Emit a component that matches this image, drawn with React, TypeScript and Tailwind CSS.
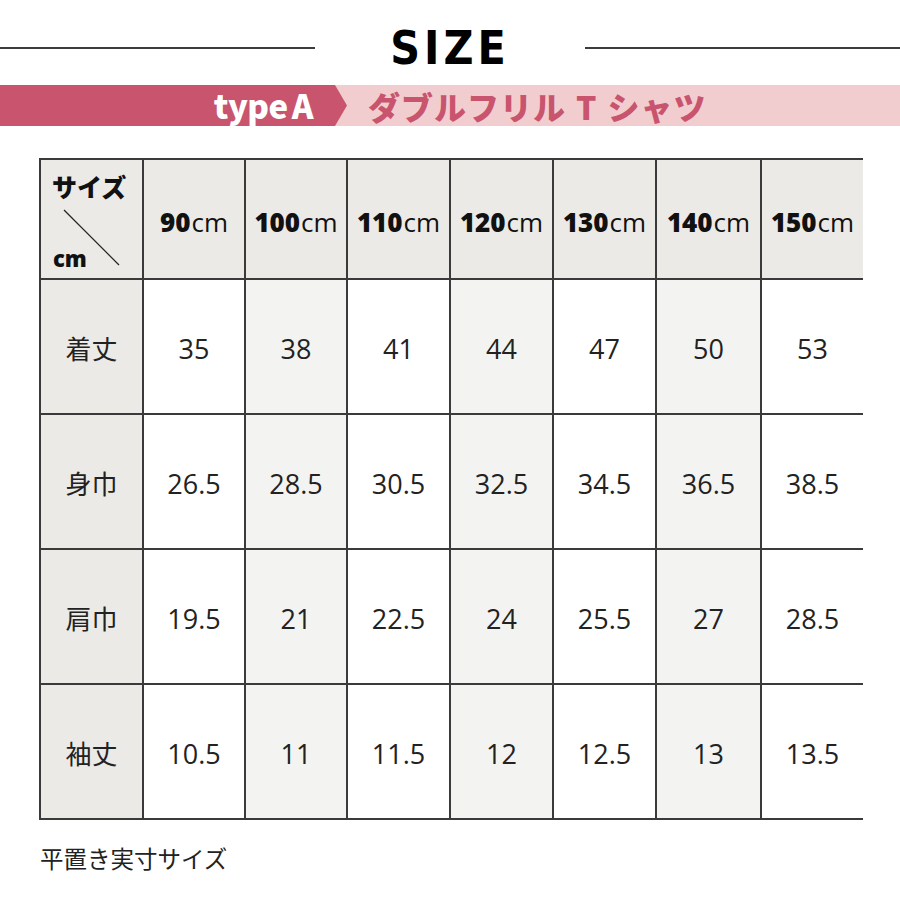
import React from 'react'

const sizes = ['90', '100', '110', '120', '130', '140', '150']

const rows: { label: string; values: string[] }[] = [
  { label: '着丈', values: ['35', '38', '41', '44', '47', '50', '53'] },
  { label: '身巾', values: ['26.5', '28.5', '30.5', '32.5', '34.5', '36.5', '38.5'] },
  { label: '肩巾', values: ['19.5', '21', '22.5', '24', '25.5', '27', '28.5'] },
  { label: '袖丈', values: ['10.5', '11', '11.5', '12', '12.5', '13', '13.5'] },
]

const font = { fontFamily: '"Open Sans", "Noto Sans CJK JP", sans-serif' }
const jp = { fontFamily: '"Noto Sans CJK JP", sans-serif' }

function HeaderCorner() {
  return (
    <div className="relative h-[118px] bg-[#ebeae7]">
      <span className="absolute left-[11px] top-[14px] text-[25px] font-black leading-none text-[#111]" style={jp}>
        サイズ
      </span>
      <svg className="absolute left-0 top-0" width="103" height="118" viewBox="0 0 103 118">
        <line x1="23" y1="50" x2="78" y2="105" stroke="#222" strokeWidth="1.2" />
      </svg>
      <span className="absolute left-[12px] top-[87px] text-[22px] font-extrabold leading-none text-[#111]" style={font}>
        cm
      </span>
    </div>
  )
}

export default function App() {
  return (
    <div className="w-[900px] h-[900px] bg-white overflow-hidden" style={font}>
      {/* title */}
      <div className="flex items-center h-[85px] pt-[10px]">
        <div className="h-[2px] w-[315px] bg-[#3c3c3c]" />
        <div
          className="flex-1 text-center text-[46px] font-black leading-none tracking-[4px] text-black"
          style={{ fontFamily: '"DejaVu Sans Condensed", "Roboto", sans-serif' }}
        >
          SIZE
        </div>
        <div className="h-[2px] w-[315px] bg-[#3c3c3c]" />
      </div>

      {/* banner */}
      <div className="relative flex h-[41px] bg-[#f1cdd0]">
        <div className="flex w-[347px] items-center justify-end pr-[34px] bg-[#c9546d] [clip-path:polygon(0_0,335px_0,347px_50%,335px_100%,0_100%)]">
          <span className="text-[33px] font-black leading-none text-white tracking-[-0.5px]" style={jp}>
            type<span className="ml-[4px]">A</span>
          </span>
        </div>
        <div className="flex items-center pl-[21px]">
          <span className="text-[32px] font-black leading-none text-[#c9546d] tracking-[1px]" style={jp}>
            ダブルフリル<span className="mx-[10px]">T</span>シャツ
          </span>
        </div>
      </div>

      {/* table */}
      <div className="ml-[39px] mt-[32px] w-[824px] bg-[#3a3a3a] p-[2px]">
        <div className="grid grid-cols-[101px_100px_100px_101px_101px_101px_103px_101px] gap-[2px]">
          <HeaderCorner />
          {sizes.map((s) => (
            <div key={s} className="flex h-[118px] items-center justify-center pt-[6px] bg-[#ebeae7] text-[26px] text-[#111]">
              <span className="font-extrabold">{s}</span>
              <span className="ml-[1px] font-normal">cm</span>
            </div>
          ))}
          {rows.map((r) => (
            <React.Fragment key={r.label}>
              <div className="flex h-[133px] items-center justify-center pt-[2px] bg-[#ebeae7] text-[26px] text-[#222]" style={jp}>
                {r.label}
              </div>
              {r.values.map((v, i) => (
                <div
                  key={i}
                  className={`flex h-[133px] items-center justify-center pt-[6px] text-[27px] text-[#222] ${
                    i % 2 === 1 ? 'bg-[#f3f3f2]' : 'bg-white'
                  }`}
                >
                  {v}
                </div>
              ))}
            </React.Fragment>
          ))}
        </div>
      </div>

      <div className="ml-[40px] mt-[27px] text-[23.5px] leading-none text-[#222]" style={jp}>
        平置き実寸サイズ
      </div>
    </div>
  )
}
